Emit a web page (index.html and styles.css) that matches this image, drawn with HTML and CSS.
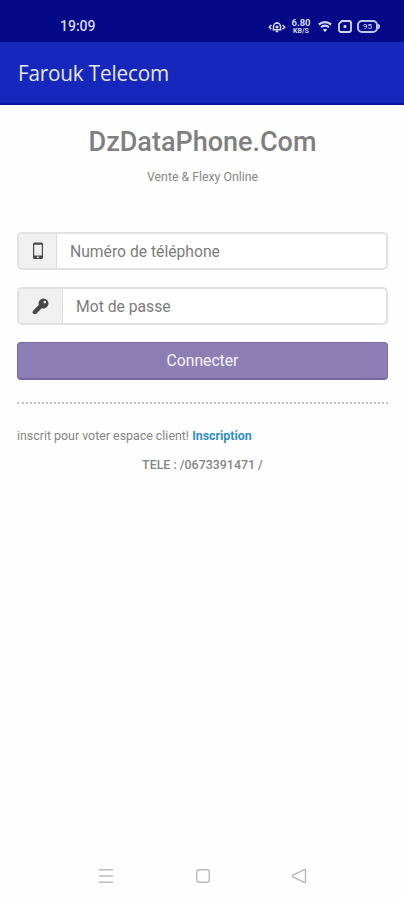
FILE: index.html
```html
<!DOCTYPE html>
<html lang="fr">
<head>
<meta charset="utf-8">
<title>Farouk Telecom</title>
<link rel="stylesheet" href="styles.css">
</head>
<body>
<div class="status">
  <span class="clock">19:09</span>
  <div class="indicators">
    <svg class="vibrate" width="18" height="14" viewBox="0 0 18 14" fill="none" stroke="currentColor" stroke-width="1.5"><path d="M5.500 9.500V6.500a3.500 3.500 0 0 1 7 0v3M4.500 9.700h9M9 2v2M7.700 11.500h2.600M3.400 5 1.300 7.200l2.100 2M14.600 5l2.100 2.200-2.100 2"/><circle cx="9" cy="7" r=".8"/></svg>
    <span class="speed"><b>6.80</b><small>KB/S</small></span>
    <svg class="wifi" width="14" height="12" viewBox="0 0 14 12" fill="none" stroke="currentColor" stroke-width="2.200"><path d="M.8 3.500q6.200-4.600 12.400 0M3 6.200q4-3 8 0"/><path d="M4.800 8.500q2.200-1.500 4.400 0L7 11.200z" fill="currentColor" stroke="none"/></svg>
    <svg class="sim" width="14" height="13" viewBox="0 0 14 13" fill="none" stroke="currentColor" stroke-width="1.800"><path d="M3.800 1H11a2 2 0 0 1 2 2v7a2 2 0 0 1-2 2H3a2 2 0 0 1-2-2V3.800z"/><path d="M5.500 6.500h3M7 5v3"/></svg>
    <span class="battery">95</span>
  </div>
</div>
<header class="appbar"><span class="app-name">Farouk Telecom</span></header>
<main class="page">
  <h1>DzDataPhone.Com</h1>
  <p class="tagline">Vente &amp; Flexy Online</p>
  <form class="login">
    <label class="field">
      <span class="addon"><svg width="12" height="18" viewBox="0 0 12 18"><path fill="currentColor" fill-rule="evenodd" d="M2.500.5h7Q11 .5 11 2v13.500Q11 17 9.500 17h-7Q1 17 1 15.500V2Q1 .5 2.500.5zM2.200 2.800v10.700h7.600V2.800zM6 14.300a.9.9 0 1 0 0 1.800.9.900 0 0 0 0-1.800z"/></svg></span>
      <input type="tel" placeholder="Numéro de téléphone">
    </label>
    <label class="field">
      <span class="addon addon-key"><svg width="17" height="17" viewBox="0 0 17 17"><path fill="currentColor" fill-rule="evenodd" d="M11.500.5a5 5 0 1 1-1.700 9.700L8.500 11.500l-1.300 1.200-2.400 2.600Q3.300 16.800 1.500 15.800T1.300 12.500L6.800 7.100A5 5 0 0 1 11.500.5zm1.300 2.300a1.300 1.300 0 1 0 0 2.600 1.300 1.300 0 0 0 0-2.600z"/></svg></span>
      <input type="password" placeholder="Mot de passe">
    </label>
    <button type="button">Connecter</button>
  </form>
  <hr>
  <p class="signup">inscrit pour voter espace client! <a>Inscription</a></p>
  <p class="phone">TELE : /0673391471 /</p>
</main>
<nav class="softkeys">
  <svg width="16" height="16" viewBox="0 0 16 16"><path d="M1 1.700h14M1 8h14M1 14.300h14"/></svg>
  <svg width="16" height="16" viewBox="0 0 16 16"><rect x="1.700" y="1.700" width="12.600" height="12.600" rx="2.500"/></svg>
  <svg width="16" height="16" viewBox="0 0 16 16"><path d="M13.500 1.500Q14.500 1.200 14.500 2.500v11q0 1.300-1 1L2 8.800Q1 8 2 7.200z"/></svg>
</nav>
</body>
</html>
```
FILE: styles.css
```css
* { box-sizing: border-box; }
body {
  margin: 0;
  height: 900px;
  display: flex;
  flex-direction: column;
  background: #fefefe;
  color: #858585;
  font-family: Roboto, "Liberation Sans", sans-serif;
}
.status {
  height: 42px;
  padding: 11px 26px 0 60px;
  display: flex;
  justify-content: space-between;
  align-items: flex-start;
  background: #030987;
  color: #d3d8f6;
}
.clock { font-size: 14px; line-height: 31px; font-weight: 500; }
.indicators { display: flex; align-items: center; height: 31px; }
.vibrate { margin-right: 5px; }
.speed { display: flex; flex-direction: column; align-items: center; width: 20px; margin-right: 7px; }
.speed b { font-size: 9.500px; line-height: 9px; font-weight: 700; }
.speed small { font-size: 7px; line-height: 8px; font-weight: 700; }
.wifi { margin-right: 6px; }
.sim { margin-right: 5px; }
.battery {
  width: 21px;
  height: 13px;
  border: 2px solid #bfc6ee;
  border-radius: 5px;
  font-size: 8px;
  line-height: 9px;
  text-align: center;
  position: relative;
}
.battery::after {
  content: "";
  position: absolute;
  right: -4px;
  top: 2px;
  width: 2px;
  height: 5px;
  border-radius: 0 2px 2px 0;
  background: #bfc6ee;
}
.appbar {
  height: 63px;
  padding: 0 18px;
  background: #1827bb;
  border-bottom: 2px solid #0711a2;
  color: #e3e9fc;
  display: flex;
  align-items: center;
}
.app-name {
  font: 500 22.500px/30px "Open Sans", sans-serif;
  letter-spacing: -.2px;
  transform: scaleX(.92);
  transform-origin: left;
}
.page { flex: 1; padding: 21px 16px 0 17px; }
h1 { margin: 0; text-align: center; font-size: 27px; line-height: 33px; font-weight: 500; color: #808080; }
.tagline { margin: 9px 0 0; text-align: center; font-size: 12.300px; line-height: 18px; }
.login { margin-top: 46px; display: grid; gap: 17px; }
.field {
  display: flex;
  height: 38px;
  border: 2px solid #e1e1e1;
  border-radius: 5px;
  overflow: hidden;
  background: #fff;
}
.addon {
  width: 38px;
  display: grid;
  place-items: center;
  background: #f0f0f0;
  border-right: 1px solid #dcdcdc;
  color: #484848;
}
.addon-key { width: 44px; }
input { flex: 1; min-width: 0; border: 0; padding: 0 13px; background: none; font: 15.700px Roboto, sans-serif; outline: 0; }
input::placeholder { color: #7c7c7c; opacity: 1; }
button {
  height: 38px;
  border: 1px solid #7568a4;
  border-bottom-width: 2px;
  border-radius: 4px;
  background: #8b7fb5;
  color: #f8f5ff;
  font: 15.700px Roboto, sans-serif;
}
hr { margin: 22px 0 0; border: 0; border-top: 2px dotted #c2c2c2; }
.signup { margin: 23px 0 0; font-size: 12.400px; line-height: 18px; }
.signup a { color: #328fc7; font-weight: 700; }
.phone { margin: 11px 0 0; text-align: center; font-size: 12.400px; line-height: 18px; font-weight: 500; }
.softkeys {
  height: 48px;
  padding: 0 97px 0 98px;
  display: flex;
  justify-content: space-between;
  align-items: center;
  fill: none;
  stroke: #bababa;
  stroke-width: 1.4;
}
```
